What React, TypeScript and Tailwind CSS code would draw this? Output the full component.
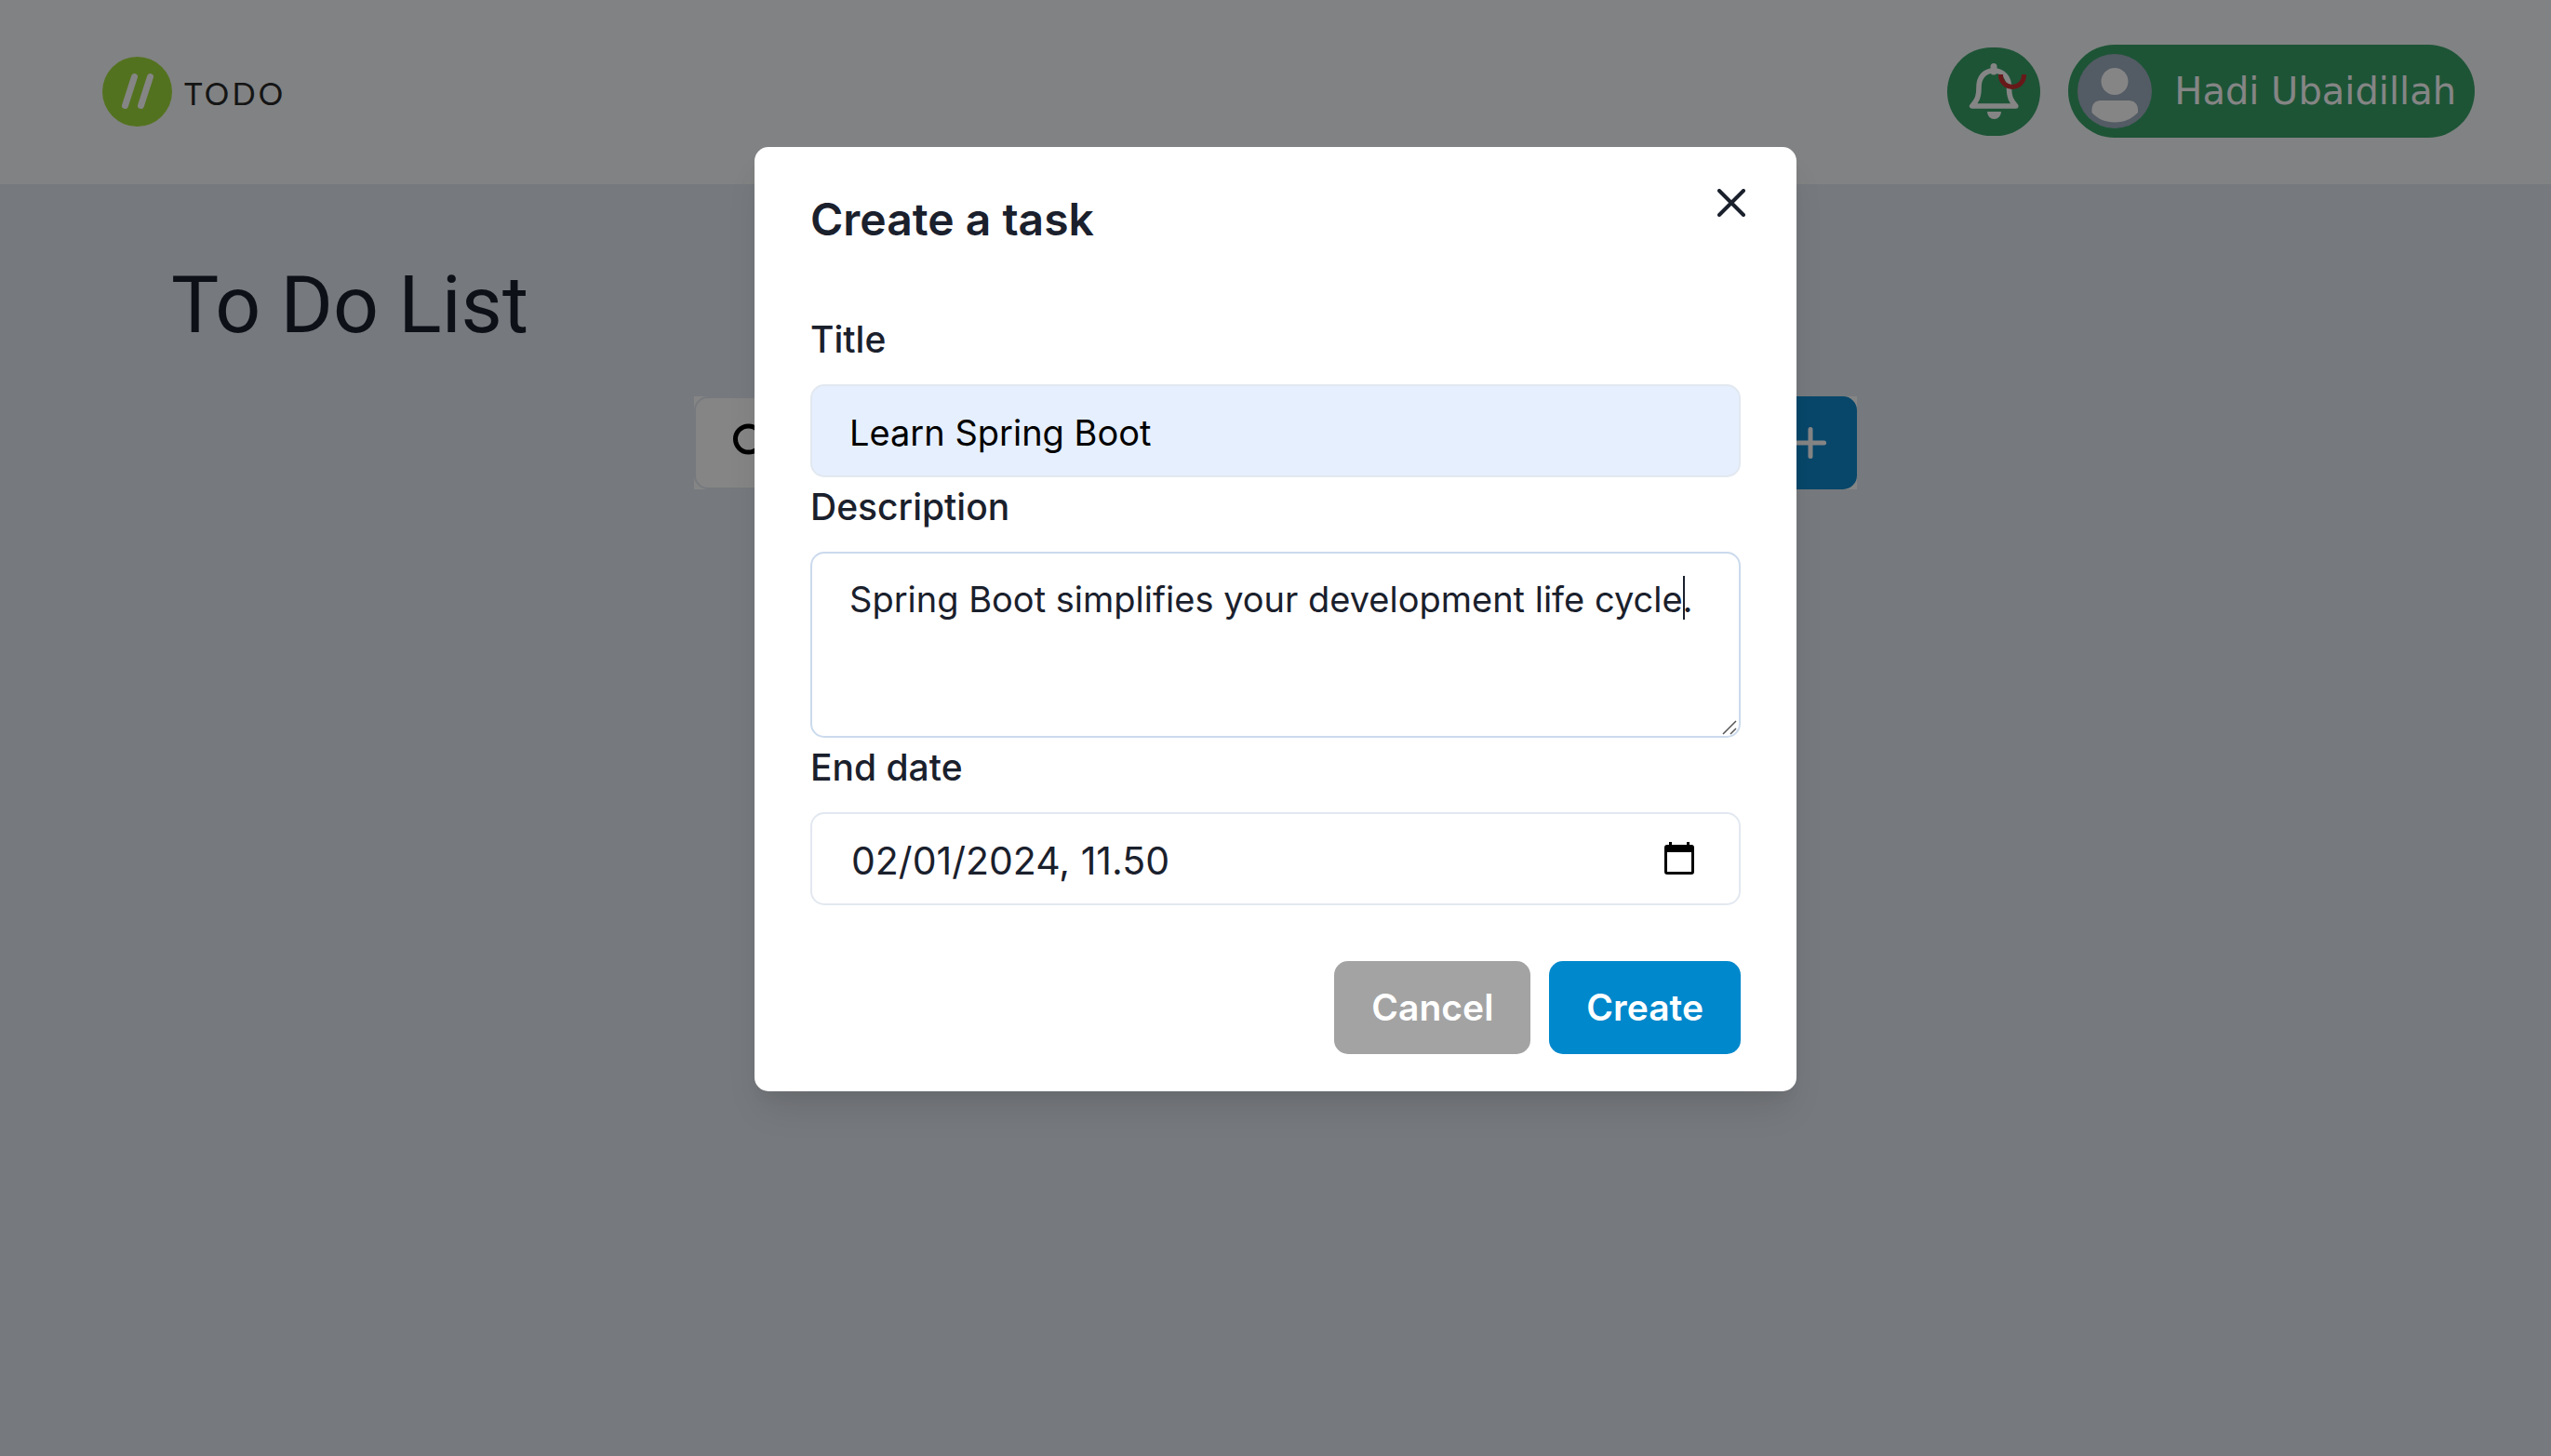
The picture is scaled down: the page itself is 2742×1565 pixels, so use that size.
import { FiPlus } from "react-icons/fi";

function Logo() {
  return (
    <a href="#" className="flex items-center gap-[13px]">
      <svg viewBox="0 0 75 75" className="size-[75px]" aria-hidden="true">
        <circle cx="37.5" cy="37.5" r="37.5" fill="#9fdb3c" />
        <path
          d="M34.500 21.500 L24.500 52.500 M51.500 21.500 L41.500 52.500"
          stroke="#ffffff"
          strokeWidth="7"
          strokeLinecap="round"
        />
      </svg>
      <span className="pt-1 font-['Lato'] text-[33px] leading-10 tracking-widest text-[#2a2a2a]">TODO</span>
    </a>
  );
}

function BellIcon() {
  return (
    <svg viewBox="0 0 100 95" className="h-[95px] w-[100px]" fill="none" aria-hidden="true">
      <path
        d="M50 25 C40 25 34 32 34 43 C34 54 31.500 57.500 26.700 63 H73.800 C69 57.500 66.500 54 66.500 43 C66.500 32 60 25 50 25 Z"
        stroke="#ffffff"
        strokeWidth="5.6"
        strokeLinejoin="round"
      />
      <path d="M50 26 V20.500" stroke="#ffffff" strokeWidth="7" strokeLinecap="round" />
      <path d="M43 69 H58 A7.5 8 0 0 1 43 69 Z" fill="#ffffff" />
      <path d="M57.500 29 V30 A12.5 12.5 0 0 0 82.500 30 V29" stroke="#c53030" strokeWidth="5" />
    </svg>
  );
}

function Avatar() {
  return (
    <svg viewBox="0 0 80 80" className="size-20" aria-hidden="true">
      <circle cx="40" cy="40" r="40" fill="#a0aec0" />
      <circle cx="40" cy="29.5" r="14.5" fill="#ffffff" />
      <path
        d="M25 50 H55 C61 50 65 54 65 60 V63 C58 70 50 73.500 40 73.500 C30 73.500 22 70 15.500 63 V60 C15.500 54 19 50 25 50 Z"
        fill="#ffffff"
      />
    </svg>
  );
}

function SearchIcon() {
  return (
    <svg viewBox="0 0 50 50" className="size-[50px]" fill="none" stroke="#000000" strokeWidth="5" aria-hidden="true">
      <circle cx="20.5" cy="21" r="14" />
      <path d="M31 31.500 L43 43.500" />
    </svg>
  );
}

export default function App() {
  return (
    <div className="relative min-h-screen bg-[#e2e8f0] font-['Inter',sans-serif] text-[39px] leading-[64px] text-[#1a202c]">
      <header className="flex items-center justify-between border-b-2 border-[#f7fafc] bg-[#f7fafc] py-12 pr-[82px] pl-[110px]">
        <Logo />
        <div className="flex items-center gap-[30px]">
          <button type="button" aria-label="Notifications" className="rounded-full bg-[#38a169]">
            <BellIcon />
          </button>
          <button
            type="button"
            className="flex items-center gap-6 rounded-full bg-[#38a169] py-[10px] pr-5 pl-[10px] font-['DejaVu_Sans'] text-[40px] font-normal text-white"
          >
            <Avatar />
            <span>Hadi Ubaidillah</span>
          </button>
        </div>
      </header>

      <main>
        <h1 className="px-[184px] pt-[70px] font-['Roboto'] text-[86px] leading-[120px] font-normal">To Do List</h1>
        <form className="mx-auto mt-[38px] flex w-[1250px] bg-white">
          <label className="flex h-[100px] flex-1 items-center rounded-l-[15px] border-2 border-[#e2e8f0] pl-9">
            <SearchIcon />
            <input type="search" aria-label="Search tasks" className="flex-1" />
          </label>
          <button
            type="button"
            aria-label="Add task"
            className="flex size-[100px] items-center justify-center rounded-r-[15px] bg-[#1088cc] text-white"
          >
            <FiPlus className="size-[50px]" strokeWidth={2.4} />
          </button>
        </form>
      </main>

      <div className="absolute inset-0 flex items-start justify-center bg-black/48 pt-[158px]">
        <section
          role="dialog"
          aria-modal="true"
          aria-labelledby="dialog-title"
          className="relative w-[1120px] rounded-[15px] bg-white shadow-[0_25px_38px_-8px_rgba(0,0,0,0.1),0_10px_15px_-5px_rgba(0,0,0,0.04)]"
        >
          <h2 id="dialog-title" className="px-[60px] py-10 text-[48px] leading-[75px] font-semibold">
            Create a task
          </h2>
          <button
            type="button"
            aria-label="Close"
            className="absolute top-5 right-[30px] flex size-20 items-center justify-center"
          >
            <svg viewBox="0 0 30 30" className="size-[30px]" aria-hidden="true">
              <path d="M2 2 L28 28 M28 2 L2 28" stroke="#1a202c" strokeWidth="4" strokeLinecap="round" />
            </svg>
          </button>

          <form>
            <div className="flex flex-col px-[60px] py-5">
              <label htmlFor="title" className="mb-4 font-medium">
                Title
              </label>
              <input
                id="title"
                type="text"
                defaultValue="Learn Spring Boot"
                className="h-[100px] rounded-[15px] border-2 border-[#e2e8f0] bg-[#e6effe] px-10 pt-1 text-[38px] text-black"
              />
              <label htmlFor="description" className="mb-4 font-medium">
                Description
              </label>
              <div className="relative flex">
                <textarea
                  id="description"
                  defaultValue="Spring Boot simplifies your development life cycle."
                  className="h-[200px] flex-1 resize-none rounded-[15px] border-2 border-[#cbdaed] px-10 py-5 text-[38px] leading-[58px] outline-none"
                />
                <span className="absolute top-[26px] left-[938px] h-[47px] w-[2px] bg-[#1a202c]" aria-hidden="true" />
                <svg
                  viewBox="0 0 16 16"
                  className="absolute right-1 bottom-[3px] size-4"
                  stroke="#555555"
                  strokeWidth="1.5"
                  aria-hidden="true"
                >
                  <path d="M1 15 L15 1 M9 15 L15 9" />
                </svg>
              </div>
              <label htmlFor="end-date" className="mb-4 font-medium">
                End date
              </label>
              <div className="flex h-[100px] items-center rounded-[15px] border-2 border-[#e2e8f0] pr-12 pl-[42px]">
                <input
                  id="end-date"
                  type="text"
                  defaultValue="02/01/2024, 11.50"
                  className="min-w-0 flex-1 pt-1 text-[41px]"
                />
                <button type="button" aria-label="Open calendar">
                  <svg viewBox="0 0 32 36" className="h-9 w-8" aria-hidden="true">
                    <path
                      d="M5 0 H8 V3 H24 V0 H27 V3 H29 Q32 3 32 6 V32 Q32 35 29 35 H3 Q0 35 0 32 V6 Q0 3 3 3 H5 Z M3 11 V32 H29 V11 Z"
                      fill="#000000"
                      fillRule="evenodd"
                    />
                  </svg>
                </button>
              </div>
            </div>
            <div className="flex justify-end gap-5 px-[60px] py-10 font-semibold text-white">
              <button type="button" className="h-[100px] rounded-[15px] bg-[#a3a3a3] px-10">
                Cancel
              </button>
              <button type="submit" className="h-[100px] rounded-[15px] bg-[#0088cc] px-10">
                Create
              </button>
            </div>
          </form>
        </section>
      </div>
    </div>
  );
}
